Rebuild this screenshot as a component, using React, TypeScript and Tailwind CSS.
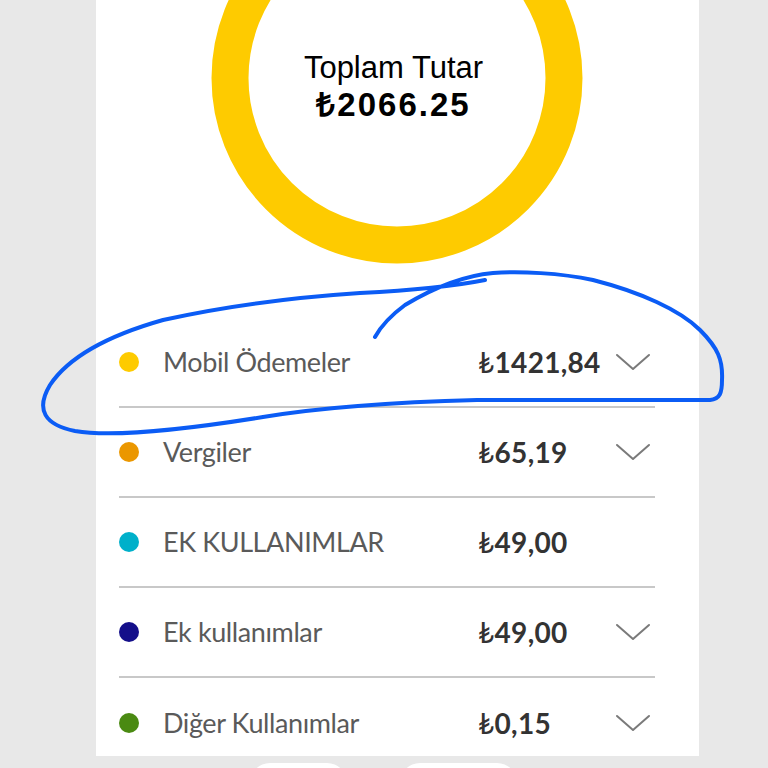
import React from "react";

const rows = [
  { label: "Mobil Ödemeler", amount: "1421,84", color: "bg-[#fecb00]", chevron: true },
  { label: "Vergiler", amount: "65,19", color: "bg-[#eb9700]", chevron: true },
  { label: "EK KULLANIMLAR", amount: "49,00", color: "bg-[#00b0ca]", chevron: false },
  { label: "Ek kullanımlar", amount: "49,00", color: "bg-[#140f8a]", chevron: true },
  { label: "Diğer Kullanımlar", amount: "0,15", color: "bg-[#4a8a12]", chevron: true },
];

function Chevron() {
  return (
    <svg width="36" height="20" viewBox="0 0 36 20" className="shrink-0 ml-[2px]">
      <path d="M2 3 L18 17 L34 3" fill="none" stroke="#7a7a7a" strokeWidth="2" strokeLinecap="round" strokeLinejoin="round" />
    </svg>
  );
}

export default function App() {
  return (
    <div className="relative w-[768px] h-[768px] overflow-hidden bg-[#e8e8e8]">
      <div className="ml-[96px] w-[603px] h-[756px] bg-white flex flex-col overflow-hidden">
        <div className="relative h-[318px] shrink-0 flex justify-center">
          <svg width="372" height="372" viewBox="0 0 372 372" className="mt-[-108px] ml-[-2px]">
            <circle cx="186" cy="186" r="167" fill="none" stroke="#fecb00" strokeWidth="37" />
          </svg>
          <div className="absolute left-0 right-0 top-[49px] flex flex-col items-center ml-[-8px] text-black" style={{ fontFamily: '"Liberation Sans", Arial, sans-serif' }}>
            <div className="text-[31px] leading-[37px]">Toplam Tutar</div>
            <div className="text-[33px] leading-[37px] font-bold tracking-[2px]">₺2066.25</div>
          </div>
        </div>
        <div className="flex flex-col pl-[23px] pr-[44px] shrink-0" style={{ fontFamily: 'Lato, "Open Sans", sans-serif' }}>
          {rows.map((r, i) => (
            <div key={i} className={`flex items-center h-[90px] shrink-0 ${i < rows.length - 1 ? "border-b-2 border-[#c8c8c8]" : ""}`}>
              <span className={`w-[20px] h-[20px] rounded-full shrink-0 ${r.color}`} />
              <span className="ml-[24px] text-[27px] text-[#5a5a5a] tracking-[-0.4px] w-[315px] shrink-0">{r.label}</span>
              <span className="text-[28px] font-bold text-[#333] w-[135px] shrink-0 tracking-[0.3px]">
                <span className="font-normal">₺</span>{r.amount}
              </span>
              {r.chevron && <Chevron />}
            </div>
          ))}
        </div>
      </div>
      <div className="absolute top-[763px] left-[250px] w-[97px] h-[30px] rounded-t-[20px] bg-white" />
      <div className="absolute top-[763px] left-[400px] w-[117px] h-[30px] rounded-t-[20px] bg-white" />
      <svg className="absolute left-0 top-0 pointer-events-none" width="768" height="768" viewBox="0 0 768 768">
        <path
          d="M485 280 C455 286 420 290 360 293 C300 297 230 305 163 320 C110 335 70 355 50 385 C35 410 45 425 75 431 C110 437 170 432 263 417 C330 406 400 402 477 400 L710 400 C720 399 722 393 722 380 C723 360 718 348 700 330 C680 310 640 292 593 280 C560 273 520 271 493 273 C460 276 430 290 405 305 C390 316 380 328 375 337"
          fill="none"
          stroke="#0b5cf5"
          strokeWidth="4"
          strokeLinecap="round"
          strokeLinejoin="round"
        />
      </svg>
    </div>
  );
}
